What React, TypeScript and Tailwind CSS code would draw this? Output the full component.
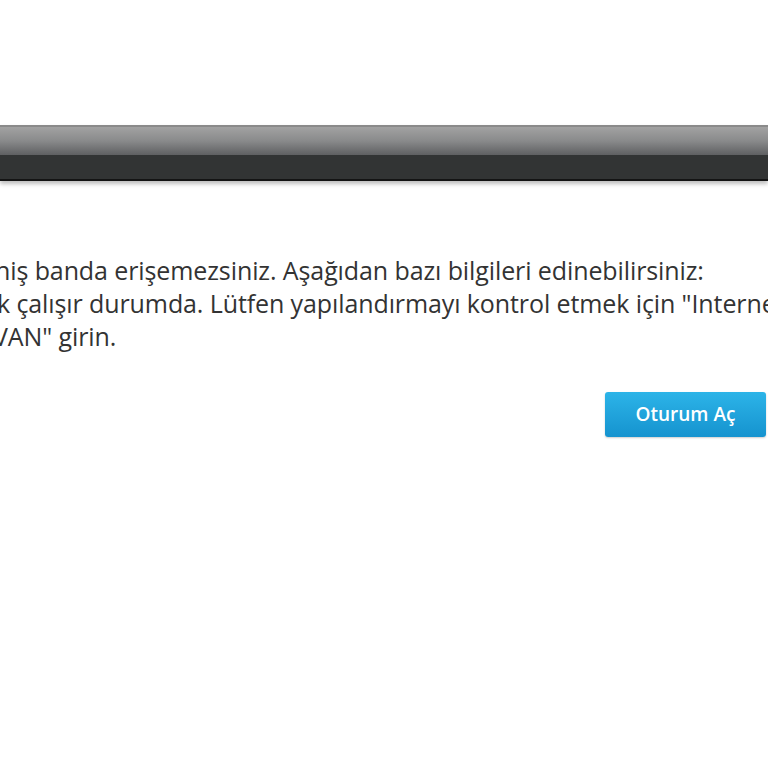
export default function App() {
	return (
		<div className="w-[768px] h-[768px] overflow-hidden bg-white font-['Open_Sans',sans-serif]">
			<div className="h-[125px]" />
			{/* header bar */}
			<div className="w-full border-t-2 border-[#8a8a8a] shadow-[0_3px_4px_rgba(0,0,0,0.25)]">
				<div className="h-[28px] bg-gradient-to-b from-[#a2a2a2] via-[#898a8b] to-[#5f6062]" />
				<div className="h-[26px] bg-[#323434] border-b-2 border-[#141414]" />
			</div>

			<div className="pt-[73px] text-[25px] tracking-[-0.1px] leading-[33px] text-[#333333] whitespace-nowrap">
				<div className="ml-[-5px]">niş banda erişemezsiniz. Aşağıdan bazı bilgileri edinebilirsiniz:</div>
				<div className="ml-[-3px]">k çalışır durumda. Lütfen yapılandırmayı kontrol etmek için "Internet &gt;</div>
				<div className="ml-[-7px]">VAN" girin.</div>
			</div>

			<div className="flex justify-end pr-[2px] pt-[39px]">
				<button className="w-[161px] h-[45px] rounded-[3px] bg-gradient-to-b from-[#2cb4e8] to-[#1593cf] text-white text-[19px] font-semibold shadow-[0_1px_2px_rgba(0,0,0,0.2)]">
					Oturum Aç
				</button>
			</div>
		</div>
	);
}
